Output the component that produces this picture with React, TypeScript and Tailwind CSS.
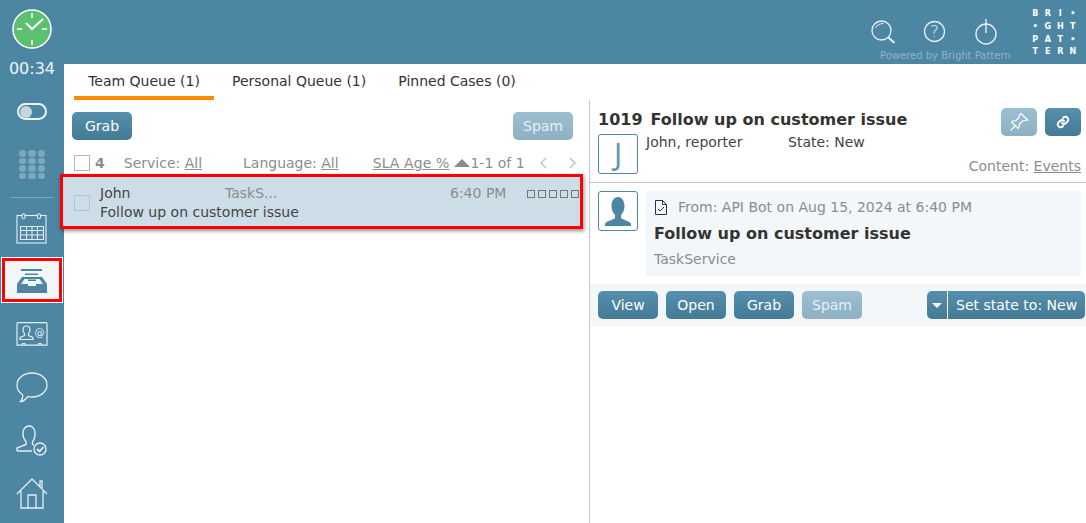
import React from 'react';

const font = { fontFamily: '"DejaVu Sans", sans-serif' };
const btn = 'h-7 w-[60px] rounded-[5px] bg-gradient-to-b from-[#5590ad] to-[#447a95] text-white text-sm flex items-center justify-center';
const btnOff = 'h-7 w-[60px] rounded-[5px] bg-gradient-to-b from-[#9cc0d2] to-[#8db1c3] text-[#e6eff4] text-sm flex items-center justify-center';

function Clock() {
  return (
    <svg width="40" height="40" viewBox="0 0 40 40">
      <circle cx="20" cy="20" r="19" fill="#5cc06f" stroke="#fff" strokeWidth="1.500" />
      <g stroke="#fff" strokeWidth="2" fill="none">
        <path d="M20 4v5M20 31v5M5 20h5M30 20h5" opacity=".8" />
        <path d="M14 14l6 6L31 10" />
      </g>
    </svg>
  );
}

function Dialpad() {
  return (
    <div className="grid grid-cols-3 gap-x-[2px] gap-y-[1px]">
      {Array.from({ length: 12 }).map((_, i) => (
        <span key={i} className="w-[7.500px] h-[6.500px] rounded-full bg-[#7ea8bd]" />
      ))}
    </div>
  );
}

function Sidebar() {
  return (
    <aside className="w-16 shrink-0 bg-[#4d86a3] flex flex-col items-center">
      <div className="mt-[9px]"><Clock /></div>
      <div className="text-white/90 text-base leading-5 mt-[10px]">00:34</div>
      <div className="mt-[24px] w-[30px] h-[17px] rounded-full border-2 border-white/90 flex items-center pl-[1px]">
        <span className="w-[12px] h-[12px] rounded-full bg-[#c5d6df]" />
      </div>
      <div className="mt-[30px]"><Dialpad /></div>
      <div className="mt-[18px] w-[42px] h-px bg-[#7ea8bd]" />
      <svg className="mt-[15px]" width="32" height="31" viewBox="0 0 32 31" fill="none" stroke="#e4edf2" strokeWidth="1.100">
        <rect x="1" y="2.500" width="29" height="27.500" />
        <rect x="6" y="0.700" width="3" height="5" rx="1.500" fill="#4d86a3" />
        <rect x="21.500" y="0.700" width="3" height="5" rx="1.500" fill="#4d86a3" />
        <path d="M4.500 13.500h23v13h-23zM4.500 17.500h23M4.500 22h23M10.500 13.500v13M16 13.500v13M21.500 13.500v13" />
      </svg>
      <div className="mt-[14px] self-start ml-[2px] w-[60px] h-[44px] bg-[#f2f6f8] border-[3px] border-[#f00] outline outline-1 outline-white flex items-center justify-center shrink-0">
        <svg width="32" height="26" viewBox="0 0 32 26" fill="#4d86a3">
          <rect x="5" y="2" width="21" height="2" />
          <rect x="9" y="6.500" width="13" height="1.500" />
          <path d="M1 17l5-7h20l5 7v9H1z" />
          <path d="M5 17l3.500-5h15l3.500 5h-7v2h-8v-2z" fill="#f2f6f8" />
          <rect x="12" y="12.500" width="8" height="1.500" fill="#4d86a3" />
        </svg>
      </div>
      <svg className="mt-[20px]" width="32" height="25" viewBox="0 0 32 25" fill="none" stroke="#e4edf2" strokeWidth="1.200">
        <path d="M2 .7h28a1 1 0 0 1 1 1v21.500h-30v-21.500a1 1 0 0 1 1-1z" />
        <path d="M6 23a1.500 1.500 0 0 1 3.500 0M22 23a1.500 1.500 0 0 1 3.500 0" />
        <path d="M4 17.500v-2l4.500-2v-2c-1-1-1.500-2-1.500-4 0-2 1.500-3.500 3.500-3.500s3.500 1.500 3.500 3.500c0 2-.5 3-1.500 4v2l4.500 2v2z" />
        <text x="23.500" y="13.500" textAnchor="middle" fontSize="10" fill="#e4edf2" stroke="none" style={font}>@</text>
      </svg>
      <svg className="mt-[25px]" width="32" height="31" viewBox="0 0 32 31" fill="none" stroke="#e4edf2" strokeWidth="1.300">
        <path d="M16 1c8 0 15 5 15 12s-7 12-15 12c-1.500 0-2.500 0-4-.5C10 27 7 29.500 4.500 29.500 6 28 7 25.500 6.500 22.500 3 20.500 1 17 1 13 1 6 8 1 16 1z" />
      </svg>
      <svg className="mt-[22px]" width="32" height="31" viewBox="0 0 32 31" fill="none" stroke="#e4edf2" strokeWidth="1.400">
        <path d="M1 26v-3l9-3.500v-3c-2-2-3-4.500-3-8C7 4 9.500 1 13 1s6 3 6 7.500c0 3.500-.5 6-2.500 8v3l1.500 1M1 26h15" />
        <circle cx="24" cy="24" r="6" />
        <path d="M21 24l2.500 2.500 4-4.500" strokeWidth="1.800" />
      </svg>
      <svg className="mt-[22px]" width="32" height="31" viewBox="0 0 32 31" fill="none" stroke="#e4edf2" strokeWidth="1.300">
        <path d="M1 16L16 1l15 15M5 13v17h22V13M12 30V17h8v13M24 8V3h2v7" />
      </svg>
    </aside>
  );
}

function TopBar() {
  return (
    <header className="h-16 bg-[#4d86a3] flex justify-end shrink-0">
      <div className="w-[140px] mr-[18px] flex flex-col">
        <div className="flex items-start h-[49px] pt-[19px]">
          <svg className="mt-[1px]" width="26" height="26" viewBox="0 0 26 26" fill="none" stroke="#e6eff4" strokeWidth="1.300">
            <circle cx="10.500" cy="10.500" r="9.500" />
            <path d="M4.500 8c1-2.500 4-4.500 8-4.500" strokeWidth="1" />
            <path d="M17.500 17.500l6 5.500" strokeWidth="2" />
          </svg>
          <svg className="ml-[26px] mt-[1px]" width="23" height="23" viewBox="0 0 23 23" fill="none" stroke="#e6eff4" strokeWidth="1.300">
            <circle cx="11.500" cy="11.500" r="10" />
            <text x="11.500" y="17" textAnchor="middle" fontSize="16" fill="#e6eff4" stroke="none" fontWeight="300" style={font}>?</text>
          </svg>
          <svg className="ml-[28px]" width="24" height="26" viewBox="0 0 24 26" fill="none" stroke="#e6eff4" strokeWidth="1.400">
            <circle cx="12" cy="15" r="10" />
            <path d="M12 0v14" />
          </svg>
        </div>
        <div className="pl-[9px] text-[10px] leading-[13px] text-[#8fb4c7] whitespace-nowrap">Powered by Bright Pattern</div>
      </div>
      <div className="mt-[8px] mr-[7px] grid grid-cols-4 w-[50px] h-[51px] text-[8px] leading-[12.700px] text-white font-bold text-center">
        {['B', 'R', 'I', '•', '•', 'G', 'H', 'T', 'P', 'A', 'T', '•', 'T', 'E', 'R', 'N'].map((c, i) => (
          <span key={i}>{c}</span>
        ))}
      </div>
    </header>
  );
}

function Tabs() {
  return (
    <nav className="h-9 flex text-sm text-[#333] pl-[10px] shrink-0">
      <div className="w-[140px] h-9 border-b-[4px] border-[#ff8c00] flex items-start justify-center pt-[7px]">Team Queue (1)</div>
      <div className="ml-[18px] pt-[7px]">Personal Queue (1)</div>
      <div className="ml-8 pt-[7px]">Pinned Cases (0)</div>
    </nav>
  );
}

function QueuePane() {
  return (
    <section className="w-[526px] shrink-0 border-r border-[#c8c8c8]">
      <div className="flex justify-between pl-2 pr-[16px] pt-[12px]">
        <button className={btn}>Grab</button>
        <button className={btnOff}>Spam</button>
      </div>
      <div className="h-[20px] mt-[13px] flex items-center text-sm text-[#8c8c8c] whitespace-nowrap">
        <span className="ml-[10px] w-4 h-4 border border-[#b5b5b5]" />
        <span className="ml-[5px] font-bold">4</span>
        <span className="ml-[19px]">Service: <u>All</u></span>
        <span className="ml-[41px]">Language: <u>All</u></span>
        <u className="ml-[34px] tracking-[0.1px]">SLA Age %</u>
        <span className="ml-[5px] w-0 h-0 border-x-[8px] border-x-transparent border-b-[8px] border-b-[#8c8c8c]" />
        <span>1-1 of 1</span>
        <svg className="ml-[14px]" width="10" height="12" viewBox="0 0 10 12" fill="none" stroke="#c4c4c4" strokeWidth="1.500"><path d="M7 1L2 6l5 5" /></svg>
        <svg className="ml-[18px]" width="10" height="12" viewBox="0 0 10 12" fill="none" stroke="#c4c4c4" strokeWidth="1.500"><path d="M3 1l5 5-5 5" /></svg>
      </div>
      <div className="mt-[1px] -ml-1 w-[523px] h-[55px] flex bg-[#ccdde7] border-[3px] border-[#f00] shadow-[1px_2px_4px_rgba(0,0,0,0.45)] text-sm text-[#444] whitespace-nowrap relative">
        <div className="ml-[11px] mt-[18px] w-4 h-4 border border-[#b5c3cb] shrink-0" />
        <div className="ml-[10px] pt-[6px] flex-1 leading-5">
          <div className="flex items-start">
            <span className="w-[125px]">John</span>
            <span className="w-[225px] text-[#8c8c8c]">TaskS...</span>
            <span className="w-[77px] text-[#8c8c8c]">6:40 PM</span>
            <span className="flex gap-[3px] mt-[7px]">
              {[0, 1, 2, 3, 4].map((i) => <span key={i} className="w-[8px] h-[8px] border border-[#777]" />)}
            </span>
          </div>
          <div className="-mt-px">Follow up on customer issue</div>
        </div>
      </div>
    </section>
  );
}

function DetailPane() {
  return (
    <section className="flex-1 text-sm">
      <div className="h-[83px] border-b border-[#c8c8c8] flex justify-between pl-2 pr-[5px] pt-2">
        <div>
          <div className="mt-[2px] text-base leading-5 font-bold text-[#333] whitespace-nowrap">1019<span className="ml-2">Follow up on customer issue</span></div>
          <div className="mt-[4px] flex items-start text-[#444] whitespace-nowrap">
            <div className="w-10 h-10 rounded-[3px] border border-[#4d86a3] flex items-center justify-center text-[30px] leading-none font-normal text-[#5f98b3] font-['Noto_Sans']">J</div>
            <span className="ml-2 w-[142px] leading-5 -mt-[2px]">John, reporter</span>
            <span className="leading-5 -mt-[2px]">State: New</span>
          </div>
        </div>
        <div className="flex flex-col items-end">
          <div className="flex gap-2">
            <div className="w-9 h-7 rounded-[5px] bg-gradient-to-b from-[#9cc0d2] to-[#8db1c3] flex items-center justify-center">
              <svg width="20" height="20" viewBox="0 0 20 20" fill="none" stroke="#fff" strokeWidth="1.200"><path d="M12 1.500l6.500 6.500-2 .5-3 .5-3 3-.5 3-1 1.500-6.500-6.500 1.500-1 3-.5 3-3 .5-3zM7 13l-5.500 5.500" /></svg>
            </div>
            <div className="w-9 h-7 rounded-[5px] bg-gradient-to-b from-[#5590ad] to-[#447a95] flex items-center justify-center">
              <svg width="16" height="16" viewBox="0 0 16 16" fill="none" stroke="#fff" strokeWidth="2" strokeLinecap="round"><path d="M7 9a3 3 0 0 0 4 0l2-2a3 3 0 0 0-4-4l-1 1M9 7a3 3 0 0 0-4 0l-2 2a3 3 0 0 0 4 4l1-1" /></svg>
            </div>
          </div>
          <div className="mt-[20px] leading-5 text-[#8c8c8c] whitespace-nowrap">Content: <u>Events</u></div>
        </div>
      </div>
      <div className="flex pl-2 pr-[5px] pt-2">
        <div className="w-10 h-10 rounded-[3px] border border-[#4d86a3] shrink-0 flex items-center justify-center">
          <svg width="28" height="29" viewBox="0 0 28 29" fill="#4d86a3"><path d="M1 29v-2c1-3 8-4 10-6v-3c-2-2-3.500-5-3.500-9 0-5 2.500-9 6.500-9s6.500 4 6.500 9c0 4-1.500 7-3.500 9v3c2 2 9 3 10 6v2z" /></svg>
        </div>
        <div className="ml-2 flex-1 h-[85px] bg-[#f3f7f9] pl-2">
          <div className="flex items-center pt-[6px] h-[26px] text-[#8c8c8c] whitespace-nowrap">
            <svg className="mr-[10px]" width="14" height="17" viewBox="0 0 14 17" fill="none" stroke="#333" strokeWidth="1"><path d="M1.500 1.500h7l4 4v10h-11zM8.500 1.500v4h4M4 10l2 2 4-4" /></svg>
            From: API Bot on Aug 15, 2024 at 6:40 PM
          </div>
          <div className="mt-[7px] text-base leading-5 font-bold text-[#333]">Follow up on customer issue</div>
          <div className="mt-[5px] leading-5 text-[#8c8c8c]">TaskService</div>
        </div>
      </div>
      <div className="mt-2 h-[42px] bg-[#f3f7f9] flex items-center pl-2 pr-px">
        <button className={btn}>View</button>
        <button className={`${btn} ml-2`}>Open</button>
        <button className={`${btn} ml-2`}>Grab</button>
        <button className={`${btnOff} ml-2`}>Spam</button>
        <div className="ml-auto w-[158px] flex h-7 rounded-[5px] overflow-hidden bg-gradient-to-b from-[#5590ad] to-[#447a95] text-white text-sm">
          <div className="w-[21px] shrink-0 flex items-center justify-center border-r border-white">
            <span className="w-0 h-0 border-x-[5px] border-x-transparent border-t-[5px] border-t-white" />
          </div>
          <div className="flex items-center pl-2 whitespace-nowrap">Set state to: New</div>
        </div>
      </div>
    </section>
  );
}

export default function App() {
  return (
    <div className="w-[1086px] h-[523px] flex overflow-hidden bg-white" style={font}>
      <Sidebar />
      <main className="flex-1 flex flex-col min-w-0">
        <TopBar />
        <Tabs />
        <div className="flex-1 flex">
          <QueuePane />
          <DetailPane />
        </div>
      </main>
    </div>
  );
}
